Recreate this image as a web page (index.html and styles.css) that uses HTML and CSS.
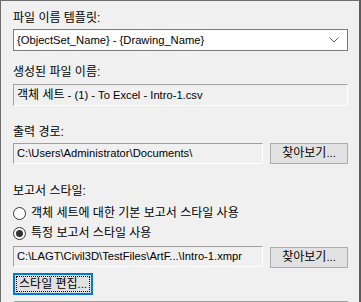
FILE: index.html
```html
<!DOCTYPE html>
<html lang="ko">
<head>
<meta charset="utf-8">
<link rel="stylesheet" href="styles.css">
</head>
<body>
<div class="frame">
  <div class="label l1">파일 이름 템플릿:</div>
  <div class="combo">
    <span class="en">{ObjectSet_Name} - {Drawing_Name}</span>
    <svg class="chev" width="10" height="6" viewBox="0 0 10 6"><path d="M0.5 0.5 L5 5 L9.5 0.5" fill="none" stroke="#5c5c5c" stroke-width="1"/></svg>
  </div>
  <div class="label l2">생성된 파일 이름:</div>
  <div class="ro full">객체 세트<span class="en"> - (1) - To Excel - Intro-1.csv</span></div>
  <div class="label l3">출력 경로:</div>
  <div class="row r1">
    <div class="ro path"><span class="en">C:\Users\Administrator\Documents\</span></div>
    <div class="btn">찾아보기<span class="en">...</span></div>
  </div>
  <div class="label l4">보고서 스타일:</div>
  <div class="radio rd1"><span class="dot"></span><span>객체 세트에 대한 기본 보고서 스타일 사용</span></div>
  <div class="radio rd2"><span class="dot on"></span><span>특정 보고서 스타일 사용</span></div>
  <div class="row r2">
    <div class="ro path"><span class="en">C:\LAGT\Civil3D\TestFiles\ArtF...\Intro-1.xmpr</span></div>
    <div class="btn">찾아보기<span class="en">...</span></div>
  </div>
  <div class="btn focus">스타일 편집<span class="en">...</span></div>
  <div class="cut"></div>
</div>
</body>
</html>
```
FILE: styles.css
```css
html, body {
  margin: 0;
  padding: 0;
  background: #f0f0f0;
}
body {
  width: 361px;
  height: 302px;
  overflow: hidden;
  font-family: "Liberation Sans", "Noto Sans CJK KR", sans-serif;
  font-size: 12px;
  color: #000;
}
.en {
  font-size: 11.2px;
}
.frame {
  box-sizing: border-box;
  width: 361px;
  height: 302px;
  border-top: 1px solid #6d6d6d;
  border-left: 1px solid #6d6d6d;
  border-right: 2px solid #5a5a5a;
  padding: 9px 12px 0 12px;
  display: flex;
  flex-direction: column;
  align-items: flex-start;
  overflow: hidden;
}
.label {
  height: 16px;
  line-height: 16px;
  white-space: nowrap;
}
.combo {
  box-sizing: border-box;
  margin-top: 3px;
  width: 335px;
  height: 22px;
  background: #fff;
  border: 1px solid #7a7a7a;
  display: flex;
  align-items: center;
  justify-content: space-between;
  padding: 0 8px 0 3px;
  white-space: nowrap;
}
.chev {
  display: block;
}
.l2 { margin-top: 13px; }
.ro {
  box-sizing: border-box;
  height: 22px;
  line-height: 20px;
  background: #f0f0f0;
  border: 1px solid;
  border-color: #a0a0a0 #ffffff #ffffff #a0a0a0;
  padding: 0 3px;
  overflow: hidden;
  white-space: nowrap;
}
.full {
  margin-top: 4px;
  width: 335px;
}
.l3 { margin-top: 18px; }
.row {
  display: flex;
  gap: 7px;
  margin-top: 3px;
  align-items: flex-start;
}
.path {
  width: 250px;
  height: 21px;
  line-height: 19px;
}
.btn {
  box-sizing: border-box;
  width: 78px;
  height: 21px;
  background: #e1e1e1;
  border: 1px solid #adadad;
  text-align: center;
  line-height: 19px;
  white-space: nowrap;
}
.l4 { margin-top: 19px; }
.radio {
  display: flex;
  align-items: center;
  gap: 5px;
  height: 16px;
  line-height: 16px;
  white-space: nowrap;
}
.rd1 { margin-top: 6px; }
.rd2 { margin-top: 4px; }
.dot {
  box-sizing: border-box;
  width: 13px;
  height: 13px;
  border-radius: 50%;
  border: 1px solid #333;
  background: #fff;
  display: flex;
  align-items: center;
  justify-content: center;
}
.dot.on::after {
  content: "";
  width: 7px;
  height: 7px;
  border-radius: 50%;
  background: #333;
}
.r2 { margin-top: 5px; }
.r2 .btn { margin-top: 1px; }
.btn.focus {
  position: relative;
  margin-top: 5px;
  width: 80px;
  height: 22px;
  border: 2px solid #0078d7;
  line-height: 18px;
}
.btn.focus::after {
  content: "";
  position: absolute;
  left: 1px;
  top: 1px;
  right: 1px;
  bottom: 1px;
  border: 1px dotted #000;
}
.cut {
  margin-top: 6px;
  margin-left: 1px;
  width: 334px;
  height: 0;
  border-top: 1px solid #a0a0a0;
}
```
